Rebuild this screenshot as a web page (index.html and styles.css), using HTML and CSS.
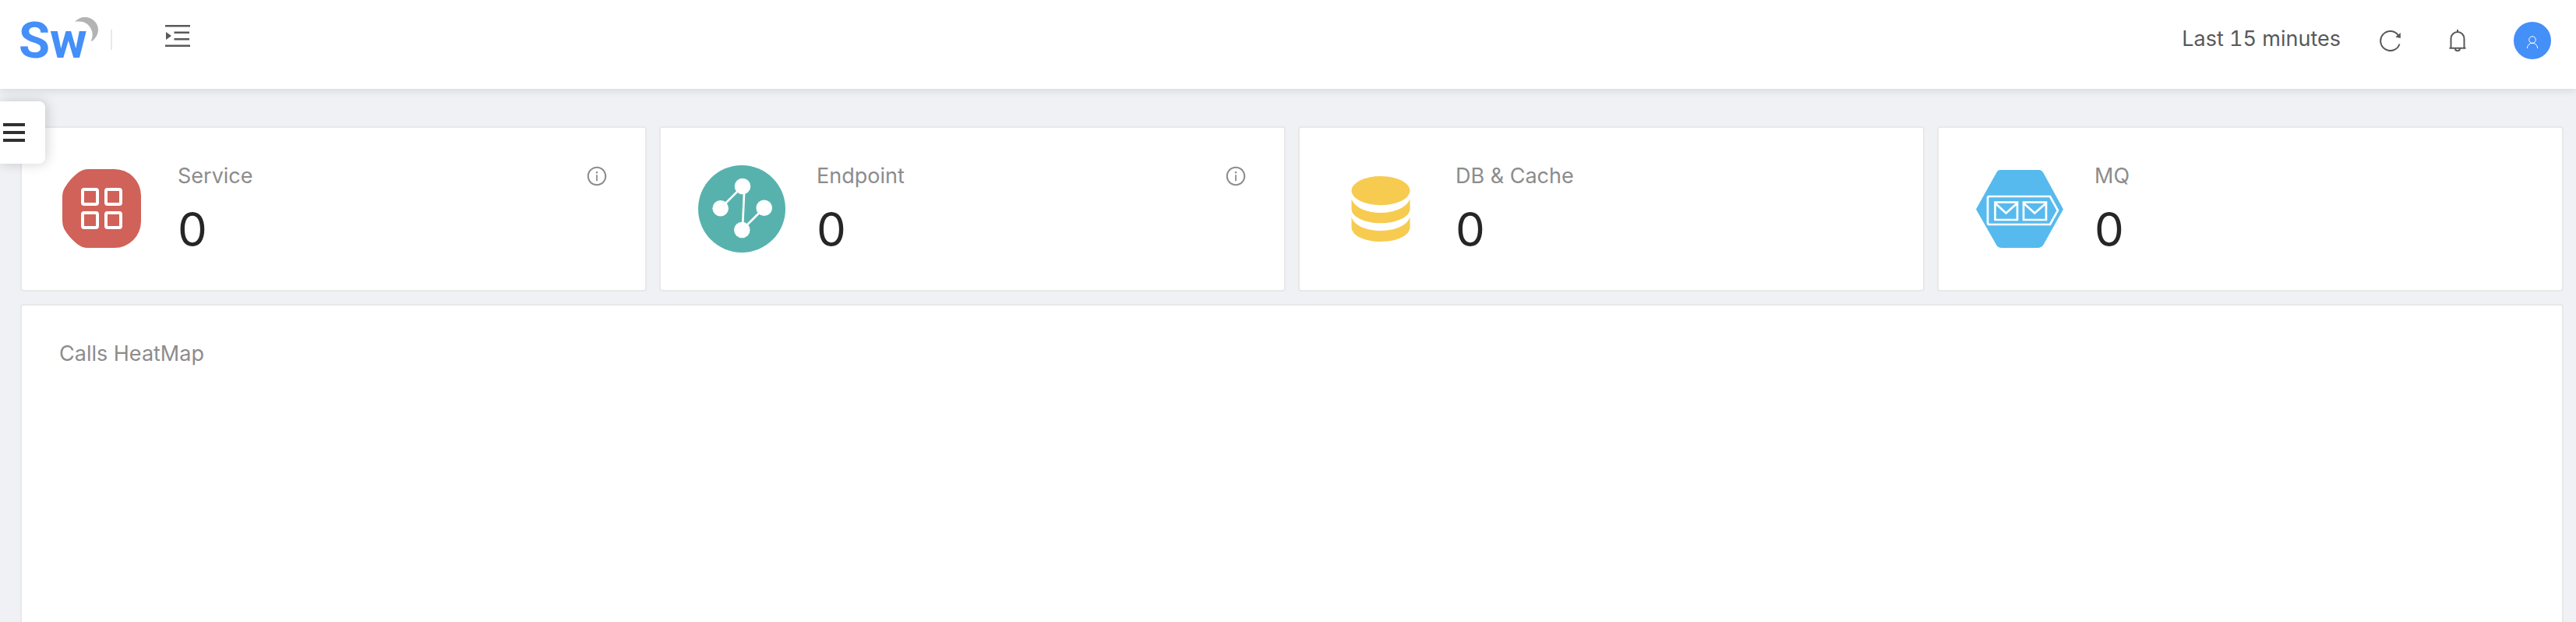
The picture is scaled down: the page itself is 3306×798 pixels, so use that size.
FILE: index.html
```html
<!DOCTYPE html>
<html lang="en">
<head>
<meta charset="utf-8">
<meta name="viewport" content="width=device-width, initial-scale=1">
<title>Dashboard</title>
<link rel="stylesheet" href="styles.css">
</head>
<body>
<header class="header">
  <a class="logo" href="#" aria-label="Home">
    <span class="logo-text">Sw</span>
    <svg class="logo-moon" viewBox="0 0 30 31" aria-hidden="true"><path d="M0 6C5 1 9 0 13 0c9 0 17 7 17 16 0 6-3 11-8 15l-1-1c2-4 2-9 1-12C19 9 12 4 0 6z"/></svg>
  </a>
  <button class="icon-button fold" type="button" aria-label="Toggle sidebar">
    <svg class="fold-icon" viewBox="0 0 32 28" aria-hidden="true"><path d="M0 0h32v2.600H0zM11.500 8.500h19.500v2.600H11.500zM11.500 16.900h19.500v2.600H11.500zM0 25.400h32v2.600H0zM1 9l7 5-7 5z"/></svg>
  </button>
  <div class="actions">
    <button class="range" type="button">Last 15 minutes</button>
    <button class="icon-button" type="button" aria-label="Reload">
      <svg class="icon" viewBox="0 0 28 28" aria-hidden="true"><path class="line" d="M25.500 18.500A12.500 12.500 0 1 1 24 7.500"/><path d="M26.800 4v7l-6.500-1.500z"/></svg>
    </button>
    <button class="icon-button" type="button" aria-label="Notifications">
      <svg class="icon" viewBox="0 0 28 28" aria-hidden="true"><path class="line" d="M3.500 23.800h21M5.500 23.500V11.500a8.500 8.500 0 0 1 17 0v12M14 0v3M11 24.500a3 2.700 0 0 0 6 0"/></svg>
    </button>
    <button class="avatar" type="button" aria-label="Account">
      <svg class="avatar-icon" viewBox="0 0 16 18" aria-hidden="true"><circle cx="8" cy="6" r="4.300"/><path d="M1.300 17a6.700 6.700 0 0 1 13.400 0"/></svg>
    </button>
  </div>
</header>

<button class="drawer" type="button" aria-label="Open settings">
  <svg class="drawer-icon" viewBox="0 0 28 24" aria-hidden="true"><path d="M0 0h28v4H0zM0 10h28v4H0zM0 20h28v4H0z"/></svg>
</button>

<main class="content">
  <section class="cards">
    <article class="card">
      <svg class="card-icon" viewBox="0 0 112 112" aria-hidden="true">
        <path fill="#d06259" d="M37 5H71A34 34 0 0 1 105 39V72A34 34 0 0 1 71 106H37C31 106 27 104 23 101Q12 92 6.500 82Q4 77 4 71V41Q4 34 7 29Q14 17 25 9Q31 5 37 5z"/>
        <g fill="none" stroke="#fff" stroke-width="4"><rect x="30" y="31" width="19" height="19" rx="2"/><rect x="60" y="31" width="19" height="19" rx="2"/><rect x="30" y="61" width="19" height="19" rx="2"/><rect x="60" y="61" width="19" height="19" rx="2"/></g>
      </svg>
      <div class="meta"><h2 class="label">Service</h2><p class="value">0</p></div>
      <button class="icon-button info" type="button" aria-label="About services">
        <svg class="icon" viewBox="0 0 1024 1024" aria-hidden="true"><path d="M512 64C264.600 64 64 264.600 64 512s200.600 448 448 448 448-200.600 448-448S759.400 64 512 64zm0 820c-205.400 0-372-166.600-372-372s166.600-372 372-372 372 166.600 372 372-166.600 372-372 372z"/><path d="M464 336a48 48 0 1 0 96 0 48 48 0 1 0-96 0zm72 112h-48c-4.400 0-8 3.600-8 8v272c0 4.400 3.600 8 8 8h48c4.400 0 8-3.600 8-8V456c0-4.400-3.600-8-8-8z"/></svg>
      </button>
    </article>
    <article class="card">
      <svg class="card-icon" viewBox="0 0 112 112" aria-hidden="true">
        <circle cx="56" cy="56" r="56" fill="#57b2ae"/>
        <path fill="none" stroke="#fff" stroke-width="2.700" d="M28.700 55.300L57 27M59 36L57.300 74M56.300 83L84.700 54.700"/>
        <g fill="#fff"><circle cx="57" cy="27" r="10.300"/><circle cx="28.700" cy="55.300" r="10.300"/><circle cx="84.700" cy="54.700" r="10.300"/><circle cx="56.300" cy="83" r="10.300"/></g>
      </svg>
      <div class="meta"><h2 class="label">Endpoint</h2><p class="value">0</p></div>
      <button class="icon-button info" type="button" aria-label="About endpoints">
        <svg class="icon" viewBox="0 0 1024 1024" aria-hidden="true"><path d="M512 64C264.600 64 64 264.600 64 512s200.600 448 448 448 448-200.600 448-448S759.400 64 512 64zm0 820c-205.400 0-372-166.600-372-372s166.600-372 372-372 372 166.600 372 372-166.600 372-372 372z"/><path d="M464 336a48 48 0 1 0 96 0 48 48 0 1 0-96 0zm72 112h-48c-4.400 0-8 3.600-8 8v272c0 4.400 3.600 8 8 8h48c4.400 0 8-3.600 8-8V456c0-4.400-3.600-8-8-8z"/></svg>
      </button>
    </article>
    <article class="card">
      <svg class="card-icon" viewBox="0 0 112 112" aria-hidden="true">
        <g fill="#f6cb50">
          <ellipse cx="56" cy="32.600" rx="37.500" ry="18.600"/>
          <path d="M18.500 43C22 54 38 61 56 61S90 54 93.500 43V56C93.500 66 77 74.300 56 74.300S18.500 66 18.500 56z"/>
          <path d="M18.500 66.500C22 77.500 38 84 56 84S90 77.500 93.500 66.500V79.500C93.500 90 77 98 56 98S18.500 90 18.500 79.500z"/>
        </g>
      </svg>
      <div class="meta"><h2 class="label">DB &amp; Cache</h2><p class="value">0</p></div>
    </article>
    <article class="card">
      <svg class="card-icon" viewBox="0 0 112 112" aria-hidden="true">
        <path fill="#57baee" d="M31 6H81Q84 6 86 9L112 56.500L86.500 102Q84 106 79 106H33Q28 106 26 102L0 56.500L26.500 9Q28 6 31 6z"/>
        <g fill="none" stroke="#fff" stroke-width="2.700"><path d="M17 40H95L105 58L95 76H17Q15 76 15 74V42Q15 40 17 40z"/><path d="M24.500 47.500h28.500v22.500H24.500zM25 49l13.500 12.500L52.500 49M61 47.500h29v22.500H61zM61.500 49l13.700 12.500L89.500 49"/></g>
      </svg>
      <div class="meta"><h2 class="label">MQ</h2><p class="value">0</p></div>
    </article>
  </section>
  <section class="panel"><h2 class="label">Calls HeatMap</h2></section>
</main>
</body>
</html>
```
FILE: styles.css
```css
* { box-sizing: border-box; }

body {
  display: flex;
  flex-direction: column;
  min-height: 100vh;
  margin: 0;
  background: #eff1f5;
  color: #595959;
  font-family: Inter, Roboto, sans-serif;
  font-size: 27px;
}

button {
  padding: 0;
  border: 0;
  background: none;
  color: inherit;
  font: inherit;
  cursor: pointer;
}

svg { display: block; fill: currentColor; }

.header {
  display: flex;
  align-items: flex-start;
  height: 114px;
  padding: 22px 32px 0 24px;
  background: #fff;
  box-shadow: 0 2px 10px rgba(0, 21, 41, 0.12);
}

.logo {
  position: relative;
  display: flex;
  align-items: flex-end;
  width: 120px;
  height: 52px;
  text-decoration: none;
}

.logo::after {
  content: "";
  width: 2px;
  height: 26px;
  margin: 0 0 10px auto;
  background: #e8e8e8;
}

.logo-text {
  color: #448ff8;
  font-family: Roboto, sans-serif;
  font-size: 65px;
  font-weight: 700;
  line-height: 44px;
}

.logo-moon {
  position: absolute;
  top: 0;
  left: 72px;
  width: 30px;
  color: #b3b3b3;
}

.fold { margin: 10px 0 0 68px; }
.fold-icon { width: 32px; }

.actions {
  display: flex;
  align-items: center;
  gap: 58px;
  margin-left: auto;
  padding-top: 6px;
}

.range {
  margin-right: -8px;
  padding-bottom: 4px;
  line-height: 44px;
  font-variant-numeric: tabular-nums;
}

.icon { width: 28px; height: 28px; }
.line { fill: none; stroke: currentColor; stroke-width: 2; }

.avatar {
  display: grid;
  place-items: center;
  width: 48px;
  height: 48px;
  border-radius: 50%;
  background: #448ff8;
  color: #fff;
}

.avatar-icon {
  width: 16px;
  margin-top: 4px;
  fill: none;
  stroke: currentColor;
}

.drawer {
  position: absolute;
  top: 130px;
  left: 0;
  display: flex;
  align-items: center;
  width: 58px;
  height: 80px;
  padding-left: 4px;
  border-radius: 0 8px 8px 0;
  background: #fff;
  box-shadow: 2px 0 16px rgba(0, 0, 0, 0.18);
  color: #303030;
}

.drawer-icon { width: 28px; }

.content {
  display: flex;
  flex: 1;
  flex-direction: column;
  gap: 16px;
  padding: 48px 16px 0 26px;
}

.cards {
  display: grid;
  grid-template-columns: repeat(4, 1fr);
  gap: 16px;
}

.card,
.panel {
  padding: 40px 48px;
  border: 2px solid #e8e8e8;
  border-radius: 4px;
  background: #fff;
}

.card {
  display: flex;
  align-items: center;
  gap: 40px;
}

.card-icon { width: 112px; height: 112px; }

.label {
  margin: 0;
  color: #8c8c8c;
  font-size: 27px;
  font-weight: 400;
  line-height: 44px;
}

.value {
  margin: 8px 0 0;
  color: #262626;
  font-size: 60px;
  line-height: 76px;
}

.info {
  align-self: flex-start;
  margin: 8px 0 0 auto;
  color: #8c8c8c;
}

.panel {
  flex: 1;
  border-bottom: 0;
  border-radius: 4px 4px 0 0;
}
```
